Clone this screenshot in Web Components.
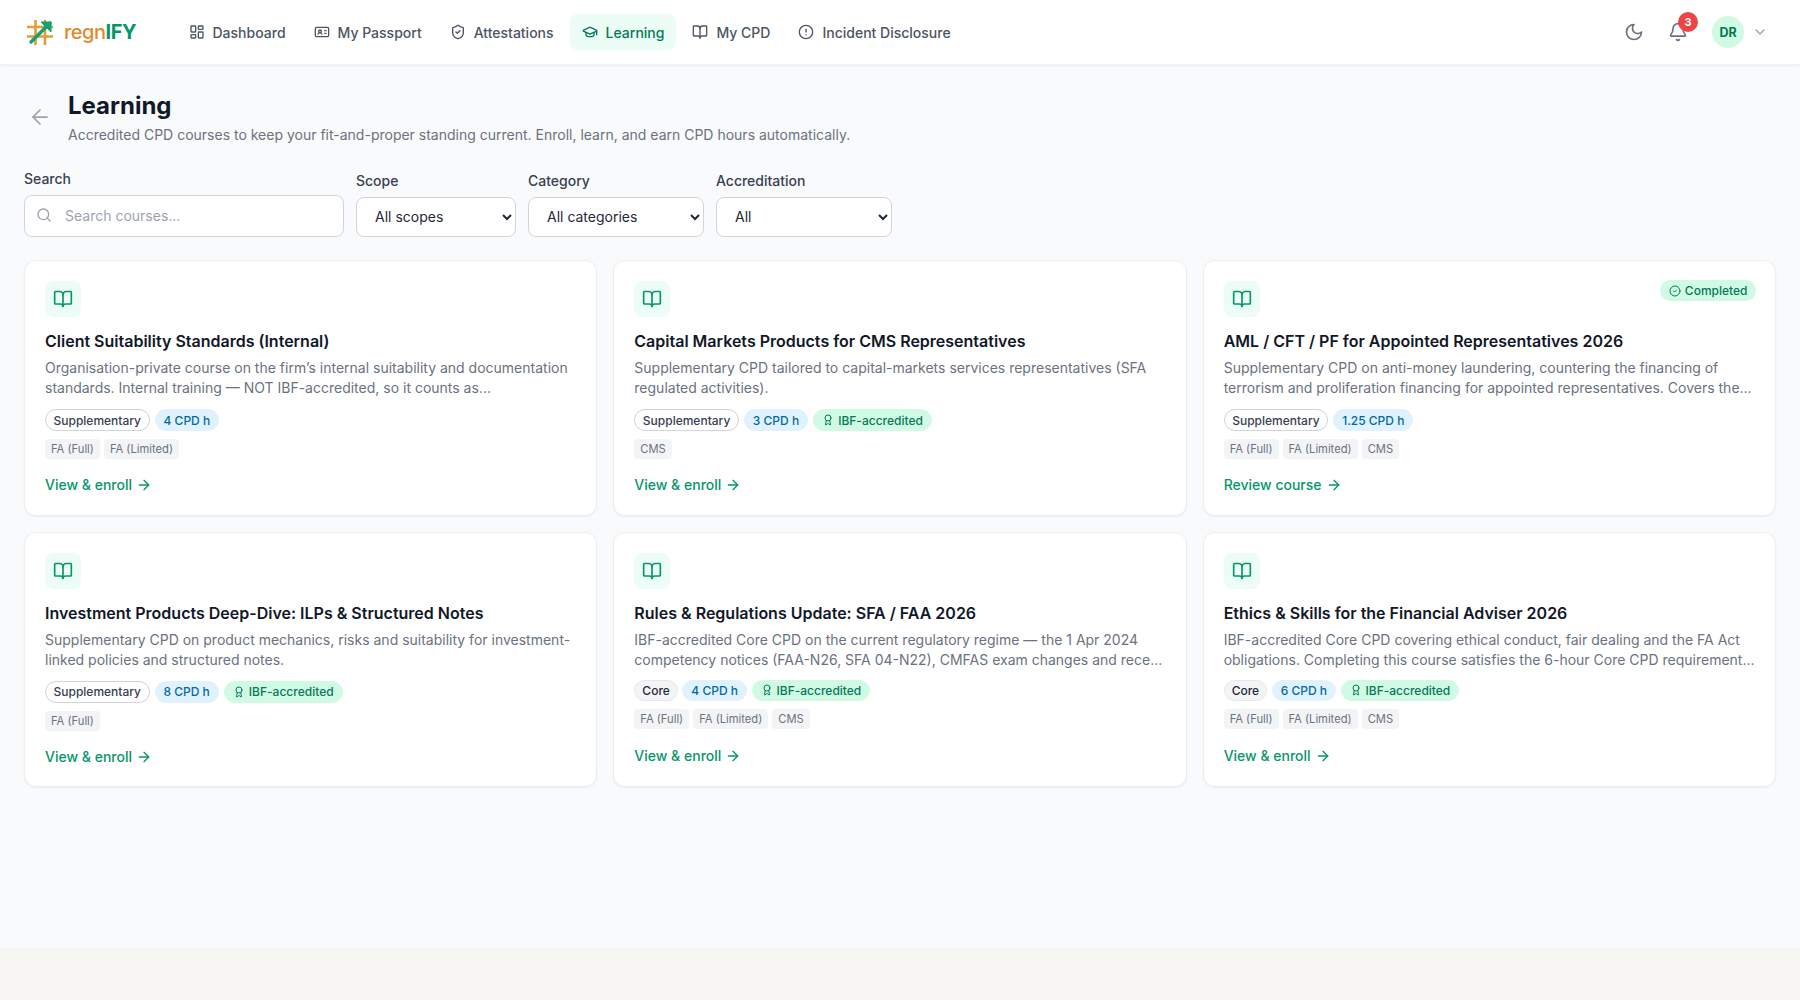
<!DOCTYPE html>
<html lang="en">
<head>
<meta charset="utf-8">
<title>Learning</title>
<style>
html, body { margin: 0; padding: 0; }
body {
    background: #f7f6f2;
    min-height: 1000px;
    font-family: Inter, "Liberation Sans", sans-serif;
    color: #111827;
}
</style>
</head>
<body>
<app-header></app-header>
<learning-page>
    <page-head title="Learning" sub="Accredited CPD courses to keep your fit-and-proper standing current. Enroll, learn, and earn CPD hours automatically."></page-head>
    <filter-bar></filter-bar>
    <course-grid>
        <course-card name="Client Suitability Standards (Internal)" kind="Supplementary" hours="4" scopes="FA (Full)|FA (Limited)"
            desc="Organisation-private course on the firm’s internal suitability and documentation standards. Internal training — NOT IBF-accredited, so it counts as..."></course-card>
        <course-card name="Capital Markets Products for CMS Representatives" kind="Supplementary" hours="3" ibf scopes="CMS"
            desc="Supplementary CPD tailored to capital-markets services representatives (SFA regulated activities)."></course-card>
        <course-card name="AML / CFT / PF for Appointed Representatives 2026" kind="Supplementary" hours="1.25" scopes="FA (Full)|FA (Limited)|CMS" done link="Review course"
            desc="Supplementary CPD on anti-money laundering, countering the financing of terrorism and proliferation financing for appointed representatives. Covers the..."></course-card>
        <course-card name="Investment Products Deep-Dive: ILPs &amp; Structured Notes" kind="Supplementary" hours="8" ibf scopes="FA (Full)"
            desc="Supplementary CPD on product mechanics, risks and suitability for investment-linked policies and structured notes."></course-card>
        <course-card name="Rules &amp; Regulations Update: SFA / FAA 2026" kind="Core" hours="4" ibf scopes="FA (Full)|FA (Limited)|CMS"
            desc="IBF-accredited Core CPD on the current regulatory regime — the 1 Apr 2024 competency notices (FAA-N26, SFA 04-N22), CMFAS exam changes and rece..."></course-card>
        <course-card name="Ethics &amp; Skills for the Financial Adviser 2026" kind="Core" hours="6" ibf scopes="FA (Full)|FA (Limited)|CMS"
            desc="IBF-accredited Core CPD covering ethical conduct, fair dealing and the FA Act obligations. Completing this course satisfies the 6-hour Core CPD requirement..."></course-card>
    </course-grid>
</learning-page>

<script>
// lucide style icons, only the inner parts
const ICONS = {
    dashboard: '<rect x="3" y="3" width="7" height="9" rx="1"/><rect x="14" y="3" width="7" height="5" rx="1"/><rect x="14" y="12" width="7" height="9" rx="1"/><rect x="3" y="16" width="7" height="5" rx="1"/>',
    idcard: '<path d="M16 10h2"/><path d="M16 14h2"/><path d="M6.17 15a3 3 0 0 1 5.66 0"/><circle cx="9" cy="11" r="2"/><rect x="2" y="5" width="20" height="14" rx="2"/>',
    shield: '<path d="M20 13c0 5-3.5 7.5-7.66 8.95a1 1 0 0 1-.67-.01C7.5 20.5 4 18 4 13V6a1 1 0 0 1 1-1c2 0 4.5-1.2 6.24-2.72a1.17 1.17 0 0 1 1.52 0C14.51 3.81 17 5 19 5a1 1 0 0 1 1 1z"/><path d="m9 12 2 2 4-4"/>',
    cap: '<path d="M21.42 10.922a1 1 0 0 0-.019-1.838L12.83 5.18a2 2 0 0 0-1.66 0L2.6 9.08a1 1 0 0 0 0 1.832l8.57 3.908a2 2 0 0 0 1.66 0z"/><path d="M22 10v6"/><path d="M6 12.5V16a6 3 0 0 0 12 0v-3.5"/>',
    book: '<path d="M12 7v14"/><path d="M3 18a1 1 0 0 1-1-1V4a1 1 0 0 1 1-1h5a4 4 0 0 1 4 4 4 4 0 0 1 4-4h5a1 1 0 0 1 1 1v13a1 1 0 0 1-1 1h-6a3 3 0 0 0-3 3 3 3 0 0 0-3-3z"/>',
    alert: '<circle cx="12" cy="12" r="10"/><path d="M12 8v4"/><path d="M12 16h.01"/>',
    moon: '<path d="M12 3a6 6 0 0 0 9 9 9 9 0 1 1-9-9Z"/>',
    bell: '<path d="M10.268 21a2 2 0 0 0 3.464 0"/><path d="M3.262 15.326A1 1 0 0 0 4 17h16a1 1 0 0 0 .74-1.673C19.41 13.956 18 12.499 18 8A6 6 0 0 0 6 8c0 4.499-1.411 5.956-2.738 7.326"/>',
    chevron: '<path d="m6 9 6 6 6-6"/>',
    back: '<path d="m12 19-7-7 7-7"/><path d="M19 12H5"/>',
    search: '<circle cx="11" cy="11" r="8"/><path d="m21 21-4.3-4.3"/>',
    award: '<path d="m15.477 12.89 1.515 8.526a.5.5 0 0 1-.81.47l-3.58-2.687a1 1 0 0 0-1.197 0l-3.586 2.686a.5.5 0 0 1-.81-.469l1.514-8.526"/><circle cx="12" cy="8" r="6"/>',
    check: '<circle cx="12" cy="12" r="10"/><path d="m9 12 2 2 4-4"/>',
    arrow: '<path d="M5 12h14"/><path d="m12 5 7 7-7 7"/>'
};

function icon(name, size, width) {
    return `<svg xmlns="http://www.w3.org/2000/svg" width="${size}" height="${size}" viewBox="0 0 24 24" fill="none" stroke="currentColor" stroke-width="${width || 2}" stroke-linecap="round" stroke-linejoin="round" style="display:block;flex-shrink:0">${ICONS[name]}</svg>`;
}

class NavItem extends HTMLElement {
    constructor() {
        super();
        this.attachShadow({ mode: 'open' });
        this.shadowRoot.innerHTML = `
<style>
:host {
    display: flex;
    align-items: center;
    gap: 8px;
    height: 36px;
    padding: 0 12px;
    border-radius: 8px;
    font-size: 14px;
    font-weight: 500;
    color: #4b5563;
    white-space: nowrap;
}
:host([active]) {
    background: #ecfdf5;
    color: #047857;
}
</style>
${icon(this.getAttribute('icon'), 16)}<slot></slot>`;
    }
}
customElements.define('nav-item', NavItem);

class AppHeader extends HTMLElement {
    constructor() {
        super();
        this.attachShadow({ mode: 'open' });
        this.shadowRoot.innerHTML = `
<style>
:host {
    display: flex;
    align-items: center;
    height: 64px;
    padding: 0 24px;
    background: #fff;
    border-bottom: 1px solid #f3f4f6;
    box-shadow: 0 1px 2px rgba(0, 0, 0, 0.05);
    position: relative;
}
.logo { display: flex; align-items: center; gap: 11px; margin-right: 40.5px; margin-left: 3px; }
.word { font-size: 20px; font-weight: 500; color: #e08a2e; letter-spacing: -0.5px; }
.word b { font-weight: 700; color: #059669; }
nav { display: flex; gap: 4px; }
.right { margin-left: auto; padding-right: 8px; display: flex; align-items: center; }
.btn {
    width: 36px; height: 36px;
    display: flex; align-items: center; justify-content: center;
    color: #6b7280;
    position: relative;
}
.btn + .btn { margin-left: 8px; }
.badge {
    position: absolute; top: -2px; right: -2px;
    width: 20px; height: 20px;
    border-radius: 50%;
    background: #ef4444;
    color: #fff;
    font-size: 11px; font-weight: 700;
    display: flex; align-items: center; justify-content: center;
}
.avatar {
    width: 32px; height: 32px;
    margin-left: 16px;
    border-radius: 50%;
    background: #d1fae5;
    color: #047857;
    font-size: 12.5px; font-weight: 700;
    display: flex; align-items: center; justify-content: center;
}
.chev { margin-left: 8px; color: #9ca3af; }
</style>
<div class="logo">
    <svg width="26" height="26" viewBox="0 0 26 26" fill="none">
        <path d="M8.5 1v25M18 1v25M0 8h26M0 17.5h26" stroke="#e59a3c" stroke-width="2.6"/>
        <path d="M4 23 23 4" stroke="#10a36f" stroke-width="3.4" stroke-linecap="round"/>
        <path d="M14 3h10v10z" fill="#10a36f" stroke="#10a36f" stroke-linejoin="round"/>
    </svg>
    <span class="word">regn<b>IFY</b></span>
</div>
<nav>
    <nav-item icon="dashboard">Dashboard</nav-item>
    <nav-item icon="idcard">My Passport</nav-item>
    <nav-item icon="shield">Attestations</nav-item>
    <nav-item icon="cap" active>Learning</nav-item>
    <nav-item icon="book">My CPD</nav-item>
    <nav-item icon="alert">Incident Disclosure</nav-item>
</nav>
<div class="right">
    <div class="btn">${icon('moon', 20)}</div>
    <div class="btn">${icon('bell', 20)}<span class="badge">3</span></div>
    <div class="avatar">DR</div>
    <div class="chev">${icon('chevron', 16)}</div>
</div>`;
    }
}
customElements.define('app-header', AppHeader);

class LearningPage extends HTMLElement {
    constructor() {
        super();
        this.attachShadow({ mode: 'open' });
        this.shadowRoot.innerHTML = `
<style>
:host {
    display: block;
    box-sizing: border-box;
    height: 883px;
    padding: 24px;
    background: #f9fafb;
}
</style>
<slot></slot>`;
    }
}
customElements.define('learning-page', LearningPage);

class PageHead extends HTMLElement {
    constructor() {
        super();
        this.attachShadow({ mode: 'open' });
        this.shadowRoot.innerHTML = `
<style>
:host { display: flex; align-items: center; gap: 12px; margin-bottom: 24px; }
.back { width: 32px; height: 32px; display: flex; align-items: center; justify-content: center; color: #9ca3af; }
h1 { margin: 1px 0 0; font-size: 24px; line-height: 32px; font-weight: 700; color: #111827; }
p { margin: 3px 0 0; font-size: 14px; line-height: 20px; color: #6b7280; }
</style>
<div class="back">${icon('back', 24, 1.75)}</div>
<div>
    <h1>${this.getAttribute('title')}</h1>
    <p>${this.getAttribute('sub')}</p>
</div>`;
    }
}
customElements.define('page-head', PageHead);

class FilterBar extends HTMLElement {
    constructor() {
        super();
        this.attachShadow({ mode: 'open' });
        this.shadowRoot.innerHTML = `
<style>
:host { display: flex; align-items: flex-end; gap: 12px; margin-bottom: 23px; }
label { display: block; font-size: 14px; line-height: 20px; font-weight: 500; color: #374151; margin-bottom: 6px; }
.search { position: relative; width: 320px; }
.search svg { position: absolute; left: 12px; bottom: 14px; color: #9ca3af; }
input {
    display: block;
    box-sizing: border-box;
    width: 100%;
    height: 42px;
    padding: 0 16px 1px 40px;
    border: 1px solid #d1d5db;
    border-radius: 8px;
    background: #fff;
    font: 14px Inter, sans-serif;
    color: #111827;
}
input::placeholder { color: #9ca3af; opacity: 1; }
select {
    display: block;
    box-sizing: border-box;
    height: 40px;
    padding: 0 0 2px 14px;
    border: 1px solid #d1d5db;
    border-radius: 8px;
    background-color: #fff;
    font: 14px Inter, sans-serif;
    color: #1f2937;
}
</style>
<div class="search">
    <label>Search</label>
    ${icon('search', 16)}
    <input type="text" placeholder="Search courses...">
</div>
<div>
    <label>Scope</label>
    <select style="width:160px"><option>All scopes</option></select>
</div>
<div>
    <label>Category</label>
    <select style="width:176px"><option>All categories</option></select>
</div>
<div>
    <label>Accreditation</label>
    <select style="width:176px"><option>All</option></select>
</div>`;
    }
}
customElements.define('filter-bar', FilterBar);

class CourseGrid extends HTMLElement {
    constructor() {
        super();
        this.attachShadow({ mode: 'open' });
        this.shadowRoot.innerHTML = `
<style>
:host { display: grid; grid-template-columns: repeat(3, 1fr); gap: 16px; }
</style>
<slot></slot>`;
    }
}
customElements.define('course-grid', CourseGrid);

class CoursePill extends HTMLElement {
    constructor() {
        super();
        this.attachShadow({ mode: 'open' });
        this.shadowRoot.innerHTML = `
<style>
:host {
    display: inline-flex;
    align-items: center;
    gap: 4px;
    box-sizing: border-box;
    height: 100%;
    padding: 0 8px;
    border: 1px solid transparent;
    border-radius: 999px;
    font-size: 12px;
    font-weight: 500;
    white-space: nowrap;
}
:host([type="supp"]) { background: #fff; border-color: #d1d5db; color: #374151; padding: 0 7.5px; }
:host([type="core"]) { background: #f3f4f6; border-color: #e5e7eb; color: #1f2937; padding: 0 7px; }
:host([type="cpd"]) { background: #e0f2fe; border-color: #e0f2fe; color: #0369a1; }
:host([type="ibf"]) { background: #d1fae5; border-color: #d1fae5; color: #047857; }
</style>
${this.hasAttribute('award') ? icon('award', 12) : ''}<slot></slot>`;
    }
}
customElements.define('course-pill', CoursePill);

class CourseCard extends HTMLElement {
    constructor() {
        super();
        this.attachShadow({ mode: 'open' });
        const a = n => this.getAttribute(n);
        const kind = a('kind');
        const scopes = a('scopes').split('|').map(s => `<span class="scope">${s}</span>`).join('');
        this.shadowRoot.innerHTML = `
<style>
:host {
    display: block;
    position: relative;
    padding: 20px 20px 19.5px;
    background: #fff;
    border: 1px solid #eceef1;
    border-radius: 12px;
    box-shadow: 0 1px 2px rgba(0, 0, 0, 0.05);
}
.ico {
    width: 36px; height: 36px;
    border-radius: 8px;
    background: #ecfdf5;
    color: #059669;
    display: flex; align-items: center; justify-content: center;
}
h3 { margin: 12px 0 5px; font-size: 16px; line-height: 24px; font-weight: 600; color: #111827; }
p { margin: 0 0 11px; font-size: 14px; line-height: 20px; color: #6b7280; }
.pills { display: flex; gap: 5px; height: 22px; margin-bottom: 8px; }
:host([kind="Core"]) p { margin-bottom: 10px; }
:host([kind="Core"]) .pills { height: 21px; gap: 4.5px; }
:host([kind="Core"]) .scopes { margin-bottom: 17px; }
.scopes { display: flex; gap: 4px; margin-bottom: 16px; }
.scope {
    padding: 0 6px;
    height: 20px;
    line-height: 20px;
    border-radius: 4px;
    background: #f3f4f6;
    font-size: 11.2px;
    color: #6b7280;
}
.go { display: flex; align-items: center; gap: 4px; font-size: 14px; line-height: 20px; font-weight: 500; color: #059669; }
.done {
    position: absolute; top: 19px; right: 19px;
    display: flex; align-items: center; gap: 4px;
    height: 21px;
    padding: 0 8.5px;
    border-radius: 999px;
    background: #d1fae5;
    color: #047857;
    font-size: 12px;
    font-weight: 500;
}
</style>
<div class="ico">${icon('book', 20)}</div>
${this.hasAttribute('done') ? `<div class="done">${icon('check', 12)}Completed</div>` : ''}
<h3>${a('name').replace(/&(?!amp;)/g, '&amp;')}</h3>
<p>${a('desc')}</p>
<div class="pills">
    <course-pill type="${kind === 'Core' ? 'core' : 'supp'}">${kind}</course-pill>
    <course-pill type="cpd">${a('hours')} CPD h</course-pill>
    ${this.hasAttribute('ibf') ? '<course-pill type="ibf" award>IBF-accredited</course-pill>' : ''}
</div>
<div class="scopes">${scopes}</div>
<div class="go">${a('link') || 'View &amp; enroll'}${icon('arrow', 16)}</div>`;
    }
}
customElements.define('course-card', CourseCard);
</script>
</body>
</html>
